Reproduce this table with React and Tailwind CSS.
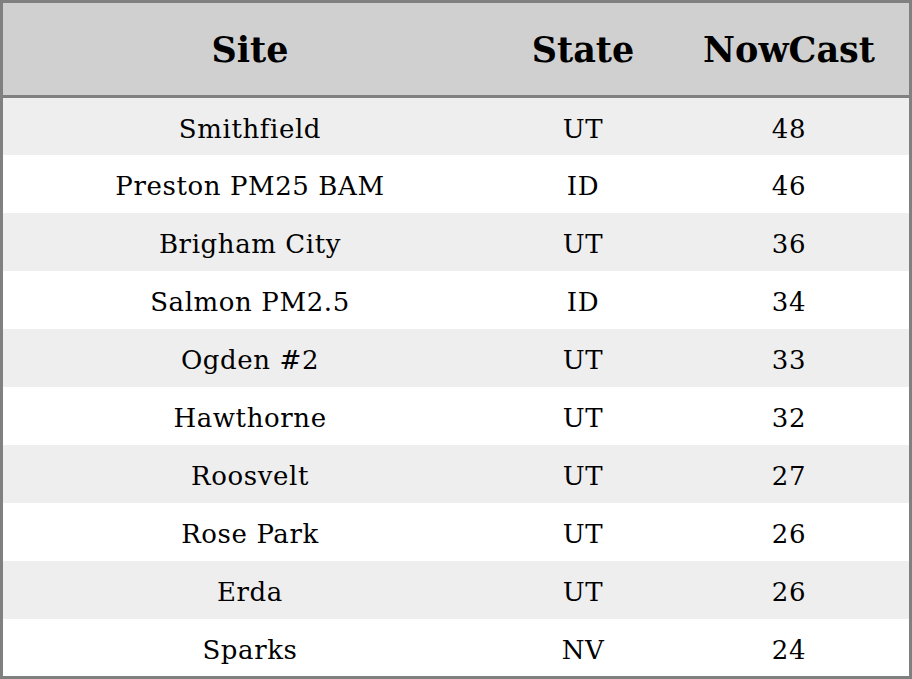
import React from "react";

const rows = [
  ["Smithfield", "UT", "48"],
  ["Preston PM25 BAM", "ID", "46"],
  ["Brigham City", "UT", "36"],
  ["Salmon PM2.5", "ID", "34"],
  ["Ogden #2", "UT", "33"],
  ["Hawthorne", "UT", "32"],
  ["Roosvelt", "UT", "27"],
  ["Rose Park", "UT", "26"],
  ["Erda", "UT", "26"],
  ["Sparks", "NV", "24"],
];

export default function App() {
  return (
    <div
      className="w-[912px] h-[679px] border-[3px] border-[#808080] bg-white text-black flex flex-col"
      style={{ fontFamily: '"DejaVu Serif", serif' }}
    >
      <div className="h-[95px] shrink-0 bg-[#d0d0d0] border-b-[3px] border-[#808080] grid grid-cols-[494px_172px_240px] items-center text-[35px] font-bold pt-[3px]">
        <div className="text-center">Site</div>
        <div className="text-center">State</div>
        <div className="text-center">NowCast</div>
      </div>
      <div className="flex-1 flex flex-col">
        {rows.map((r, i) => (
          <div
            key={i}
            className={`grid grid-cols-[494px_172px_240px] items-center text-[26px] tracking-[0.6px] pt-[5px] ${
              i === 0 || i === 9 ? "h-[57px]" : "h-[58px]"
            } ${i % 2 === 0 ? "bg-[#eeeeee]" : "bg-white"}`}
          >
            <div className="text-center">{r[0]}</div>
            <div className="text-center">{r[1]}</div>
            <div className="text-center">{r[2]}</div>
          </div>
        ))}
      </div>
    </div>
  );
}
